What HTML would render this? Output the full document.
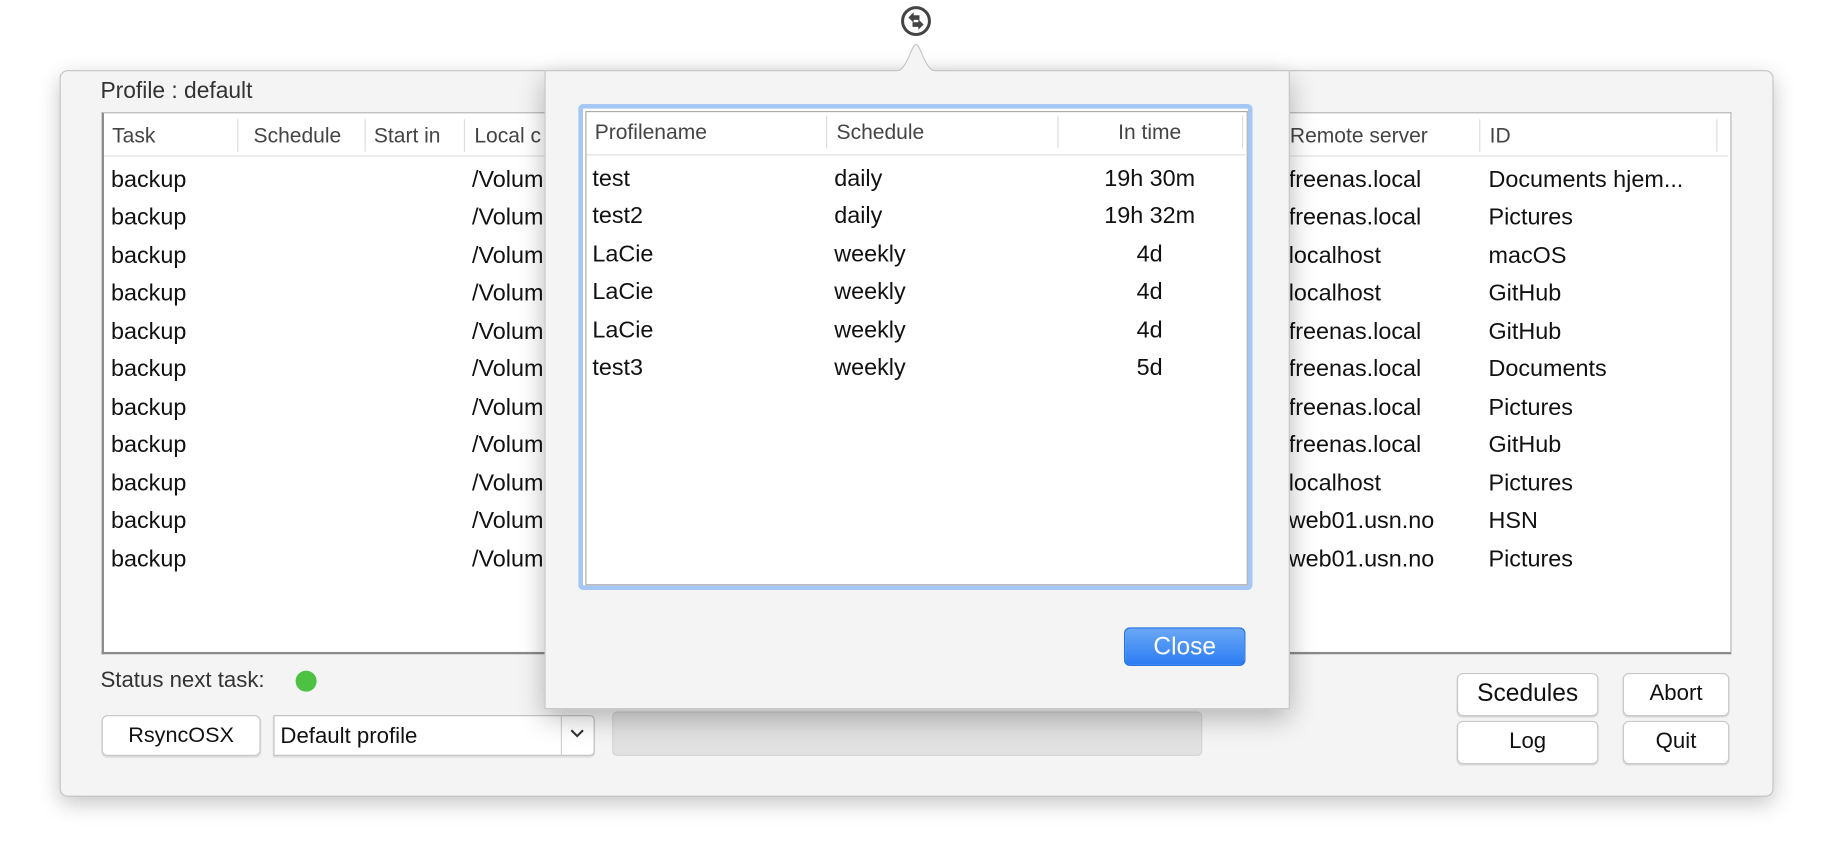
<!DOCTYPE html>
<html><head><meta charset="utf-8"><style>
html,body{margin:0;padding:0;background:#fff;width:1832px;height:864px;overflow:hidden}
#s{position:absolute;left:0;top:0;width:1568px;height:740px;transform:scale(1.16837);transform-origin:0 0;font-family:"Liberation Sans",sans-serif;color:#111}
.a{position:absolute}
.win{left:51px;top:60px;width:1465px;height:620px;background:#f4f4f4;border:1px solid #c4c4c4;border-radius:7px;box-shadow:0 6px 18px rgba(0,0,0,.22)}
.tbl{left:87px;top:96px;width:1392px;height:461px;background:#fff;border:1px solid #9a9a9a;border-width:1px 1px 2px 2px;border-color:#b5b5b5 #b5b5b5 #8a8a8a #8a8a8a}
.h{font-size:18px;color:#444;top:106px}
.sep{width:1px;height:28px;top:102px;background:#ddd}
.r{font-size:20px;color:#111}
.btn{background:#fff;border:1px solid #c9c9c9;border-radius:5px;box-shadow:0 1px 1px rgba(0,0,0,.12);text-align:center;font-size:19px;color:#111}
.pop{left:466px;top:60px;width:636px;height:545px;background:#f4f4f4;border:1px solid #c6c6c6;box-shadow:0 8px 22px rgba(0,0,0,.28)}
</style></head><body><div id="s">
<div class="a win"></div>
<div class="a" style="left:86px;top:67px;font-size:19.5px;color:#333">Profile : default</div>
<div class="a tbl"></div>
<div class="a" style="left:89px;top:133px;width:1390px;height:1px;background:#e0e0e0"></div>
<div class="a h" style="left:96px">Task</div>
<div class="a sep" style="left:203px"></div>
<div class="a h" style="left:217px">Schedule</div>
<div class="a sep" style="left:312px"></div>
<div class="a h" style="left:320px">Start in</div>
<div class="a sep" style="left:397px"></div>
<div class="a h" style="left:406px">Local c</div>
<div class="a h" style="left:1104px">Remote server</div>
<div class="a sep" style="left:1266px"></div>
<div class="a h" style="left:1275px">ID</div>
<div class="a sep" style="left:1469px"></div>
<div id="rows"></div>
<div class="a" style="left:86px;top:572px;font-size:19px;color:#333">Status next task:</div>
<div class="a" style="left:253px;top:574px;width:18px;height:18px;border-radius:50%;background:#4cc142"></div>
<div class="a btn" style="left:87px;top:612px;width:134px;height:33px;line-height:32px;font-size:18.5px">RsyncOSX</div>
<div class="a" style="left:234px;top:612px;width:273px;height:33px;background:#fff;border:1px solid #c4c4c4;border-radius:0 4px 4px 0;box-shadow:0 1px 1px rgba(0,0,0,.1)"></div>
<div class="a" style="left:480px;top:612px;width:1px;height:35px;background:#d0d0d0"></div>
<div class="a" style="left:240px;top:620px;font-size:19px">Default profile</div>
<svg class="a" style="left:486px;top:621px" width="16" height="14"><path d="M3 4 L8 9 L13 4" fill="none" stroke="#333" stroke-width="1.8"/></svg>
<div class="a" style="left:524px;top:609px;width:503px;height:36px;background:#e1e1e1;border:1px solid #d3d3d3;border-radius:4px"></div>
<div class="a btn" style="left:1247px;top:576px;width:119px;height:35px;line-height:34px;font-size:21px">Scedules</div>
<div class="a btn" style="left:1389px;top:576px;width:89px;height:35px;line-height:33px">Abort</div>
<div class="a btn" style="left:1247px;top:617px;width:119px;height:35px;line-height:34px">Log</div>
<div class="a btn" style="left:1389px;top:617px;width:89px;height:35px;line-height:34px">Quit</div>

<div class="a pop"></div>
<svg class="a" style="left:754px;top:34px" width="60" height="28"><path d="M0 26.5 H14 C22 26.5 26 4 30 4 C34 4 38 26.5 46 26.5 H60 V28 H0Z" fill="#f4f4f4"/><path d="M0 26.5 H14 C22 26.5 26 4 30 4 C34 4 38 26.5 46 26.5 H60" fill="none" stroke="#c6c6c6"/></svg>
<svg class="a" style="left:770px;top:4px" width="28" height="28"><circle cx="14" cy="14" r="11.5" fill="none" stroke="#444" stroke-width="2.6"/><path d="M7.5 11 L12 6.5 V9 H17 V13 H12 V15.5Z" fill="#444"/><path d="M20.5 17 L16 21.5 V19 H11 V15 H16 V12.5Z" fill="#444"/></svg>
<div class="a" style="left:495px;top:89px;width:569px;height:408px;border:4px solid #a5c7f3;border-radius:4px;background:#fff"></div>
<div class="a" style="left:501px;top:95px;width:565px;height:404px;border:1px solid #aaa;background:#fff"></div>
<div class="a" style="left:502px;top:132px;width:564px;height:1px;background:#e0e0e0"></div>
<div class="a h" style="left:509px;top:103px">Profilename</div>
<div class="a sep" style="left:707px;top:99px"></div>
<div class="a h" style="left:716px;top:103px">Schedule</div>
<div class="a sep" style="left:905px;top:99px"></div>
<div class="a h" style="left:905px;top:103px;width:158px;text-align:center">In time</div>
<div class="a sep" style="left:1063px;top:99px"></div>
<div id="prow"></div>
<div class="a" style="left:962px;top:537px;width:104px;height:33px;border-radius:5px;background:linear-gradient(#6aa8f6,#2b7cf3);border:1px solid #2a74e0;color:#fff;font-size:21px;text-align:center;line-height:32px;box-sizing:border-box">Close</div>
</div>
<script>
var ids=["Documents hjem...","Pictures","macOS","GitHub","GitHub","Documents","Pictures","GitHub","Pictures","HSN","Pictures"];
var rs=["freenas.local","freenas.local","localhost","localhost","freenas.local","freenas.local","freenas.local","freenas.local","localhost","web01.usn.no","web01.usn.no"];
var h="";
for(var i=0;i<11;i++){var t=143+i*32.45;
h+='<div class="a r" style="left:95px;top:'+t+'px">backup</div><div class="a r" style="left:404px;top:'+t+'px">/Volum</div><div class="a r" style="left:1103px;top:'+t+'px">'+rs[i]+'</div><div class="a r" style="left:1274px;top:'+t+'px">'+ids[i]+'</div>';}
document.getElementById("rows").outerHTML=h;
var p=[["test","daily","19h 30m"],["test2","daily","19h 32m"],["LaCie","weekly","4d"],["LaCie","weekly","4d"],["LaCie","weekly","4d"],["test3","weekly","5d"]];
h="";
for(var i=0;i<p.length;i++){var t=142+i*32.45;
h+='<div class="a r" style="left:507px;top:'+t+'px">'+p[i][0]+'</div><div class="a r" style="left:714px;top:'+t+'px">'+p[i][1]+'</div><div class="a r" style="left:905px;width:158px;text-align:center;top:'+t+'px">'+p[i][2]+'</div>';}
document.getElementById("prow").outerHTML=h;
</script>
</body></html>
